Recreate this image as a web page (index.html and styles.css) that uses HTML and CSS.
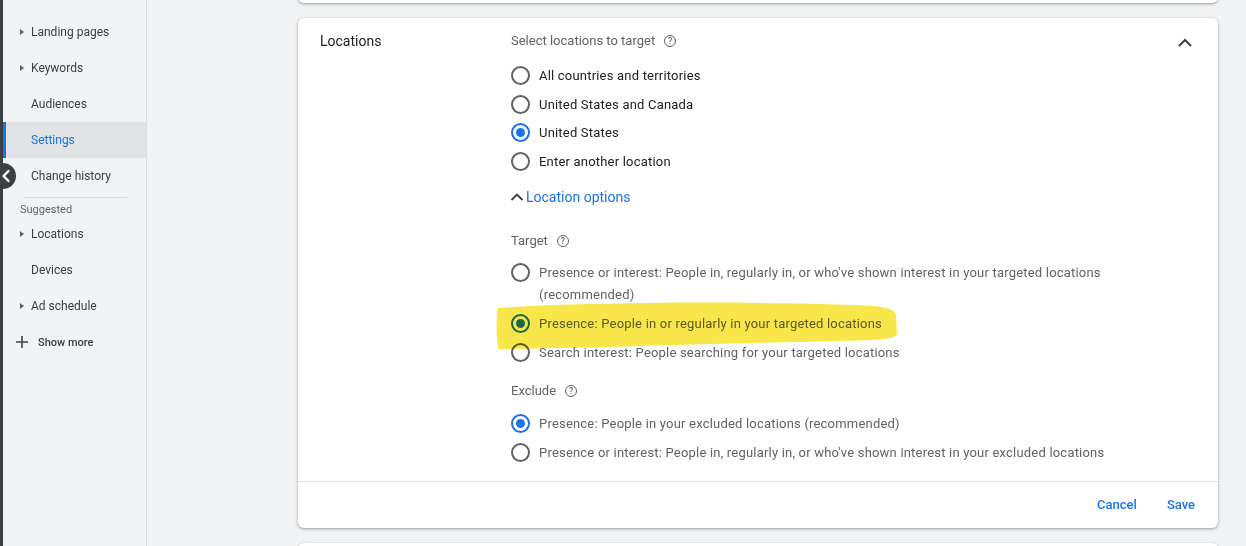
FILE: index.html
```html
<!DOCTYPE html>
<html lang="en">
<head>
    <meta charset="UTF-8">
    <meta name="viewport" content="width=device-width, initial-scale=1.0">
    <title>Settings - Locations</title>
    <link rel="stylesheet" href="styles.css">
</head>
<body>
<div class="page">
    <div class="edge"></div>
    <button class="collapse" aria-label="Collapse">
        <svg width="14" height="14" viewBox="0 0 14 14"><path d="M9.5 2 L4.5 7 L9.5 12" fill="none" stroke="#fff" stroke-width="2.4" stroke-linecap="round" stroke-linejoin="round"/></svg>
    </button>
    <nav class="sidebar">
        <div class="nav-item"><span class="caret"></span>Landing pages</div>
        <div class="nav-item"><span class="caret"></span>Keywords</div>
        <div class="nav-item">Audiences</div>
        <div class="nav-item active">Settings</div>
        <div class="nav-item">Change history</div>
        <div class="nav-divider"></div>
        <div class="nav-label">Suggested</div>
        <div class="nav-item"><span class="caret"></span>Locations</div>
        <div class="nav-item">Devices</div>
        <div class="nav-item"><span class="caret"></span>Ad schedule</div>
        <div class="nav-more">
            <svg width="14" height="14" viewBox="0 0 14 14"><path d="M7 1 V13 M1 7 H13" stroke="#3c4043" stroke-width="1.6"/></svg>
            Show more
        </div>
    </nav>
    <main class="main">
        <div class="card card-prev"></div>

        <section class="card">
            <div class="card-body">
                <div class="card-title">Locations</div>
                <div class="card-content">
                    <div class="field-label">Select locations to target <span class="help">?</span></div>
                    <div class="radio-list">
                        <label class="radio-row"><span class="radio"></span>All countries and territories</label>
                        <label class="radio-row"><span class="radio"></span>United States and Canada</label>
                        <label class="radio-row"><span class="radio checked"></span>United States</label>
                        <label class="radio-row"><span class="radio"></span>Enter another location</label>
                    </div>

                    <div class="options-toggle">
                        <svg width="16" height="16" viewBox="0 0 16 16"><path d="M2.5 11 L8 5.5 L13.5 11" fill="none" stroke="#3c4043" stroke-width="1.8"/></svg>
                        Location options
                    </div>

                    <div class="field-label target-label">Target <span class="help">?</span></div>
                    <div class="option-list">
                        <label class="option-row"><span class="radio"></span><span class="option-text">Presence or interest: People in, regularly in, or who've shown interest in your targeted locations (recommended)</span></label>
                        <label class="option-row"><span class="radio checked"></span><span class="option-text">Presence: People in or regularly in your targeted locations</span></label>
                        <label class="option-row"><span class="radio"></span><span class="option-text">Search interest: People searching for your targeted locations</span></label>
                    </div>

                    <div class="field-label exclude-label">Exclude <span class="help">?</span></div>
                    <div class="option-list exclude-list">
                        <label class="option-row"><span class="radio checked"></span><span class="option-text">Presence: People in your excluded locations (recommended)</span></label>
                        <label class="option-row"><span class="radio"></span><span class="option-text">Presence or interest: People in, regularly in, or who've shown interest in your excluded locations</span></label>
                    </div>
                </div>
                <div class="card-toggle">
                    <svg width="24" height="24" viewBox="0 0 24 24"><path d="M6 15 L12 9 L18 15" fill="none" stroke="#3c4043" stroke-width="2"/></svg>
                </div>
            </div>
            <div class="card-footer">
                <button class="text-btn">Cancel</button>
                <button class="text-btn">Save</button>
            </div>

            <!-- highlighter mark drawn over the screenshot -->
            <svg class="highlight" width="402" height="48" viewBox="0 0 402 48">
                <path d="M2 6 C40 3 90 2 150 1 C220 0 300 1 360 3 C385 4 398 6 400 12 L401 32 C399 38 380 38 340 39 C260 41 180 43 110 45 C60 46 20 47 3 47 C0 40 0 14 2 6 Z" fill="#f9e64a"/>
            </svg>
        </section>

        <div class="card card-next"></div>
    </main>
</div>
</body>
</html>
```

FILE: styles.css
```css
* {
    box-sizing: border-box;
}

body {
    margin: 0;
    font-family: Roboto, "Noto Sans", Arial, sans-serif;
    background-color: #f1f3f4;
    color: #3c4043;
    height: 546px;
    overflow: hidden;
}

.page {
    display: flex;
    height: 546px;
    position: relative;
    overflow: hidden;
}

.edge {
    width: 3px;
    background-color: #3c4043;
    flex-shrink: 0;
}

.collapse {
    position: absolute;
    left: -10px;
    top: 163px;
    width: 26px;
    height: 26px;
    border-radius: 50%;
    border: none;
    background-color: #3c4043;
    display: flex;
    align-items: center;
    justify-content: flex-end;
    padding: 0 3px 0 0;
}

/* sidebar */
.sidebar {
    width: 144px;
    flex-shrink: 0;
    border-right: 1px solid #dadce0;
    padding-top: 14px;
    font-size: 12px;
}

.nav-item {
    height: 36px;
    display: flex;
    align-items: center;
    padding-left: 28px;
    position: relative;
    color: #3c4043;
}

.caret {
    position: absolute;
    left: 17px;
    top: 15px;
    width: 0;
    height: 0;
    border-top: 3px solid transparent;
    border-bottom: 3px solid transparent;
    border-left: 4px solid #5f6368;
}

.nav-item.active {
    background-color: #e1e3e6;
    color: #1a73e8;
    border-left: 3px solid #1a73e8;
    padding-left: 25px;
}

.nav-divider {
    height: 1px;
    background-color: #dadce0;
    margin: 3px 19px 0 21px;
}

.nav-label {
    font-size: 11px;
    color: #5f6368;
    line-height: 13px;
    padding: 5px 0 0 17px;
    height: 18px;
}

.nav-more {
    height: 36px;
    display: flex;
    align-items: center;
    gap: 9px;
    padding-left: 12px;
    font-size: 11px;
    font-weight: 500;
    color: #3c4043;
}

/* main column */
.main {
    flex: 1;
    padding-left: 151px;
    display: flex;
    flex-direction: column;
}

.card {
    width: 920px;
    background: white;
    border-radius: 6px;
    box-shadow: 0 1px 2px rgba(60, 64, 67, 0.3), 0 1px 3px 1px rgba(60, 64, 67, 0.15);
    position: relative;
    flex-shrink: 0;
}

.card-prev {
    height: 12px;
    margin-top: -9px;
    margin-bottom: 15px;
}

.card-next {
    height: 40px;
    margin-top: 15px;
}

.card-body {
    display: grid;
    grid-template-columns: 191px 1fr 24px;
    padding: 14px 22px 13px 22px;
}

.card-title {
    font-size: 14px;
    color: #202124;
    line-height: 18px;
}

.card-toggle {
    margin-top: -1px;
    margin-left: 1px;
}

.field-label {
    font-size: 13px;
    color: #5f6368;
    line-height: 18px;
    display: flex;
    align-items: center;
}

.help {
    display: inline-flex;
    align-items: center;
    justify-content: center;
    width: 12px;
    height: 12px;
    border: 1.3px solid #5f6368;
    border-radius: 50%;
    font-size: 8.5px;
    font-weight: 500;
    margin-left: 9px;
    color: #5f6368;
}

.radio-list {
    margin-top: 11px;
}

.radio-row {
    height: 28.7px;
    display: flex;
    align-items: center;
    gap: 9px;
    font-size: 13px;
    letter-spacing: 0.2px;
    color: #202124;
}

.radio {
    width: 19px;
    height: 19px;
    border: 2px solid #5f6368;
    border-radius: 50%;
    flex-shrink: 0;
    position: relative;
}

.radio.checked {
    border-color: #1a73e8;
}

.radio.checked::after {
    content: "";
    position: absolute;
    left: 3px;
    top: 3px;
    width: 9px;
    height: 9px;
    border-radius: 50%;
    background-color: #1a73e8;
}

.options-toggle {
    margin-top: 11px;
    height: 20px;
    display: flex;
    align-items: center;
    gap: 1px;
    margin-left: -2px;
    font-size: 14px;
    color: #1a73e8;
}

.target-label {
    margin-top: 25px;
}

.exclude-label {
    margin-top: 14px;
}

.option-list {
    margin-top: 9px;
}

.exclude-list {
    margin-top: 10px;
}

.option-row {
    display: flex;
    align-items: flex-start;
    gap: 9px;
    padding: 3px 0 4px;
    font-size: 13px;
    letter-spacing: 0.2px;
    line-height: 22px;
    color: #5f6368;
}

.option-row .radio {
    margin-top: 1px;
}

.option-text {
    max-width: 590px;
}

.card-footer {
    border-top: 1px solid #e0e0e0;
    height: 47px;
    display: flex;
    align-items: center;
    justify-content: flex-end;
    gap: 14px;
    padding-right: 15px;
}

.text-btn {
    background: none;
    border: none;
    font-family: inherit;
    font-size: 13px;
    font-weight: 500;
    color: #1a73e8;
    padding: 6px 8px;
    cursor: pointer;
}

.highlight {
    position: absolute;
    left: 198px;
    top: 284px;
    mix-blend-mode: multiply;
    pointer-events: none;
}
```
